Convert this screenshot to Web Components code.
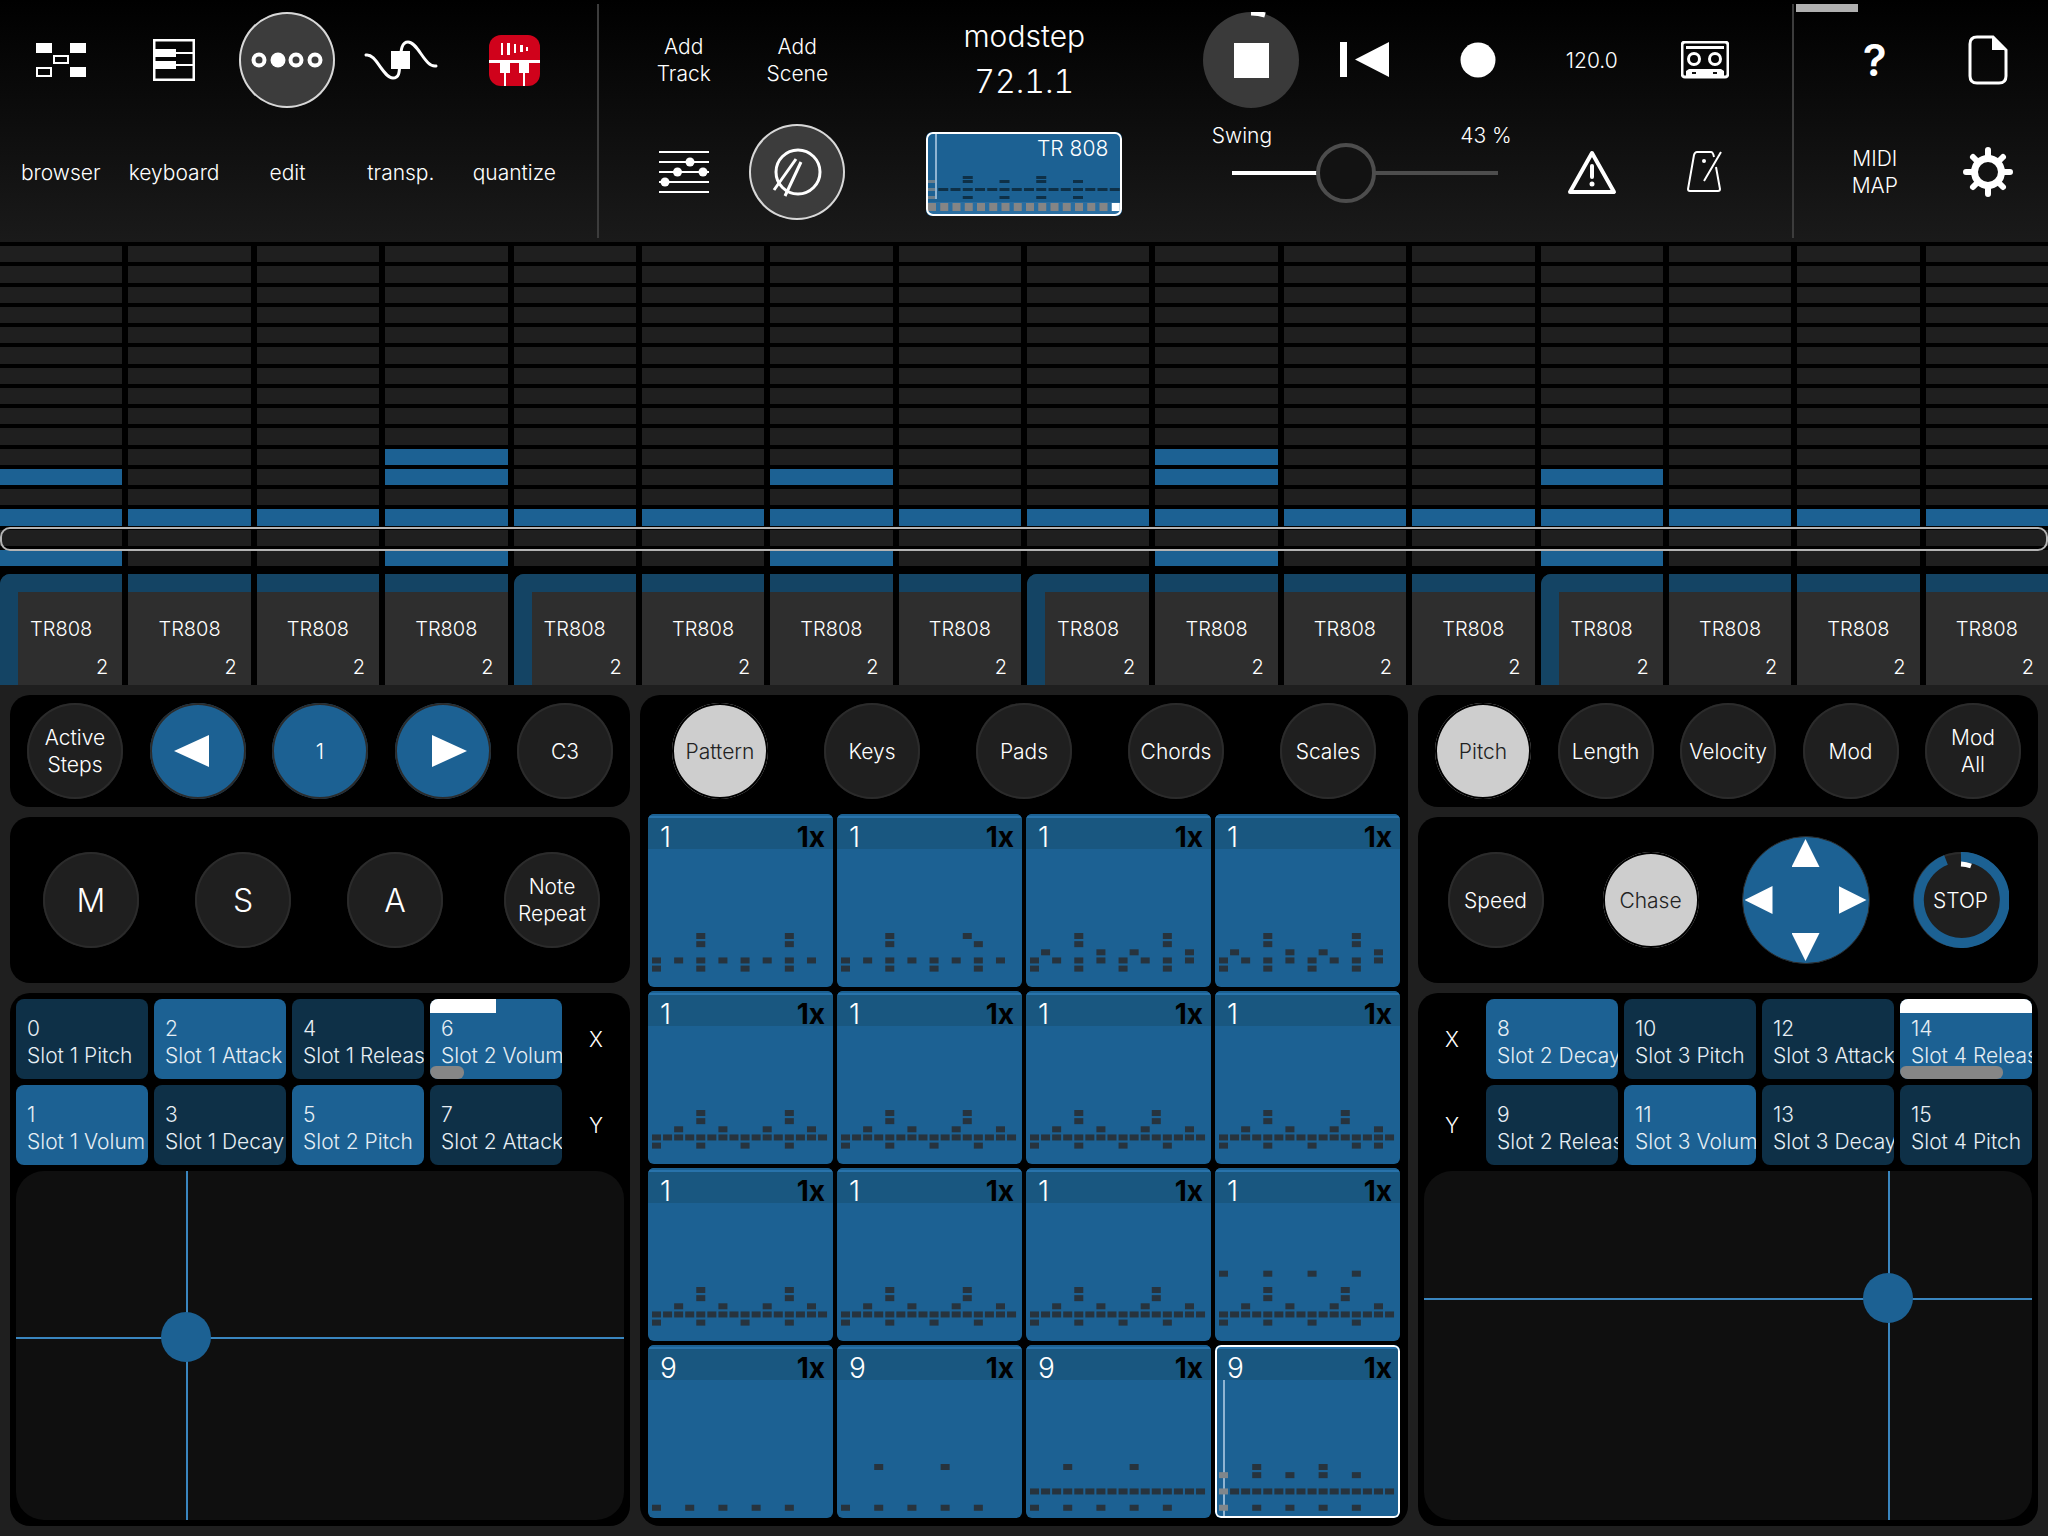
<!DOCTYPE html>
<html lang="en">
<head>
<meta charset="utf-8">
<meta name="viewport" content="width=device-width, initial-scale=1">
<title>modstep</title>
<style>
    body {
        margin: 0;
        background: #1f1f1f;
        color: #fff;
        font-family: Inter, "Liberation Sans", sans-serif;
        font-weight: 300;
        font-size: 21px;
        line-height: 27px;
        --blue: #1c6193;
        --dark-blue: #0e3047;
    }
</style>
</head>
<body>
<step-app></step-app>

<script>
// Small helper: attach an open shadow root with styles and markup
function shadow(el, css, html) {
    const root = el.shadowRoot || el.attachShadow({ mode: 'open' });
    root.innerHTML = `<style>* { box-sizing: border-box; } ${css}</style>${html}`;
    return root;
}

const ICONS = {
    browser: [50, 34, `<path fill="#fff" d="M0 0h16v10H0zM34 0h16v10H34zM34 24h16v10H34z"/><path fill="none" stroke="#fff" stroke-width="2" d="M18 13h14v7H18zM1 25h14v8H1z"/>`],
    keyboard: [42, 42, `<rect x="1" y="1" width="40" height="40" fill="none" stroke="#fff" stroke-width="3"/><path fill="#fff" d="M1 10h22v8H1zM1 22h22v8H1zM22 13h19v2H22zM22 25h19v2H22z"/>`],
    edit: [72, 16, `<g fill="none" stroke="#fff" stroke-width="4"><circle cx="8" cy="8" r="5.5"/><circle cx="45" cy="8" r="5.5"/><circle cx="64" cy="8" r="5.5"/></g><circle cx="27" cy="8" r="7.5" fill="#fff"/>`],
    transp: [74, 44, `<path d="M2 17C12 15 19 40 29 40C37 40 35 30 36 22C37 14 37 4 44 4C54 4 61 30 72 28" fill="none" stroke="#fff" stroke-width="3" stroke-linecap="round"/><path fill="#fff" d="M27 13h19v18H27z"/>`],
    quantize: [51, 51, `<rect width="51" height="51" rx="12" fill="#d0021b"/><path fill="#fff" d="M0 25h51v3H0zM12 8h2v12h-2zM18 8h3v12h-3zM25 9h2v9h-2zM31 10h3v7h-3zM37 12h2v4h-2zM11 28h10v10h-4v13h-2V38h-4zM30 28h10v10h-4v13h-2V38h-4z"/>`],
    mixer: [50, 42, `<path stroke="#fff" stroke-width="2" d="M0 1h50M0 11h50M0 21h50M0 31h50M0 41h50"/><g fill="#fff"><circle cx="31" cy="11" r="4.5"/><circle cx="18.5" cy="21" r="4.5"/><circle cx="44" cy="21" r="4.5"/><circle cx="6" cy="31" r="4.5"/></g>`],
    drum: [50, 52, `<g fill="none" stroke="#fff" stroke-width="3"><circle cx="26" cy="26" r="22"/><path d="M24 13L2 44M29 16L13 50"/></g>`],
    stop: [96, 96, `<path fill="#fff" d="M31 31h35v35H31z"/><path d="M48 1A47 47 0 0 1 62 3" fill="none" stroke="#fff" stroke-width="5"/>`],
    back: [50, 36, `<path fill="#fff" d="M0 0h7v35H0zM49 0v35L15 17.5z"/>`],
    record: [36, 36, `<circle cx="18" cy="18" r="17.5" fill="#fff"/>`],
    tape: [48, 38, `<rect x="1" y="1" width="46" height="35" rx="3" fill="none" stroke="#fff" stroke-width="3"/><path fill="#fff" d="M5 5h38v3H5zM5 36v-6l3-2h32l3 2v6z"/><g fill="none" stroke="#fff" stroke-width="3"><circle cx="13" cy="18" r="5.5"/><circle cx="34" cy="18" r="5.5"/></g><path fill="#111" d="M11 31h4v2h-4zM32 31h4v2h-4z"/>`],
    warning: [50, 44, `<path d="M25 3L47 42H3z" fill="none" stroke="#fff" stroke-width="4" stroke-linejoin="round"/><path d="M25 16v11" stroke="#fff" stroke-width="4" stroke-linecap="round"/><circle cx="25" cy="34" r="2.5" fill="#fff"/>`],
    metronome: [36, 42, `<path d="M29 16L33 38Q33 40 31 40H3Q1 40 1 38L7 4Q8 1 10 1H24Q26 1 27 6M34 1L17 30" fill="none" stroke="#fff" stroke-width="2"/><circle cx="17" cy="10" r="2" fill="#fff"/>`],
    doc: [40, 50, `<path d="M25 2H9Q2 2 2 9V41Q2 48 9 48H31Q38 48 38 41V15z" fill="none" stroke="#fff" stroke-width="3"/><path d="M24 1V15H38z" fill="#fff"/>`],
    gear: [50, 50, `<circle cx="25" cy="25" r="13.5" fill="none" stroke="#fff" stroke-width="7"/><path d="M25 3v7M25 40v7M3 25h7M40 25h7M10 10l4 4M36 36l4 4M40 10l-4 4M14 36l-4 4" stroke="#fff" stroke-width="6" stroke-linecap="round"/>`],
    left: [96, 96, `<path fill="#fff" d="M59 32v32L24 48z"/>`],
    right: [96, 96, `<path fill="#fff" d="M37 32v32l35-16z"/>`],
    ring: [96, 96, `<path d="M48 5A43 43 0 1 1 33 8" fill="none" stroke="#1c6193" stroke-width="10"/><path d="M48 12A36 36 0 0 1 58 14" fill="none" stroke="#fff" stroke-width="5"/>`]
};

class AppIcon extends HTMLElement {
    connectedCallback() {
        const [w, h, body] = ICONS[this.getAttribute('name')];
        shadow(this, `:host { display: block; } svg { display: block; }`,
            `<svg width="${w}" height="${h}" viewBox="0 0 ${w} ${h}" aria-hidden="true">${body}</svg>`);
    }
}
customElements.define('app-icon', AppIcon);

// Round button; variants: blue, light, lit, gray, plain
class RoundButton extends HTMLElement {
    connectedCallback() {
        const label = this.getAttribute('label');
        const icon = this.getAttribute('icon');
        shadow(this, `
            :host { display: block; }
            button {
                display: grid;
                place-items: center;
                width: 96px;
                height: 96px;
                padding: 0;
                border: 0;
                border-radius: 50%;
                background: #1f1f1f;
                box-shadow: inset 0 0 0 2px #2b2b2b;
                color: inherit;
                font: inherit;
                white-space: nowrap;
                cursor: pointer;
            }
            app-icon, .text { grid-area: 1 / 1; }
            :host([variant="blue"]) button { background: var(--blue); }
            :host([variant="light"]) button { background: #cecece; box-shadow: inset 0 0 0 2px #000; color: #222; }
            :host([variant="lit"]) button { background: #3c3c3c; box-shadow: inset 0 0 0 2px #d8d8d8; }
            :host([variant="gray"]) button { background: #3a3a3a; box-shadow: none; }
            :host([variant="plain"]) button { background: none; box-shadow: none; }
            :host([size="large"]) button { font-size: 32px; }
            :host([size="help"]) button { font-size: 44px; font-weight: 600; }
        `, `<button type="button" ${label ? `aria-label="${label}"` : ''}>
                ${icon ? `<app-icon name="${icon}"></app-icon>` : ''}
                <span class="text"><slot></slot></span>
            </button>`);
    }
}
customElements.define('round-button', RoundButton);

class SwingSlider extends HTMLElement {
    connectedCallback() {
        const value = this.getAttribute('value');
        shadow(this, `
            :host { display: block; width: 326px; padding-top: 6px; }
            .labels { display: flex; justify-content: space-between; padding: 0 16px 0 10px; }
            input {
                appearance: none;
                display: block;
                width: 100%;
                height: 60px;
                margin: -6px 0 0;
                background: linear-gradient(90deg, #fff ${value}%, #4d4d4d ${value}%) center / calc(100% - 60px) 4px no-repeat;
            }
            input::-webkit-slider-thumb {
                appearance: none;
                width: 60px;
                height: 60px;
                border: 4px solid #4d4d4d;
                border-radius: 50%;
                background: #121212;
            }
        `, `<div class="labels"><label for="swing">Swing</label><output for="swing">${value} %</output></div>
            <input id="swing" type="range" min="0" max="100" value="${value}">`);
    }
}
customElements.define('swing-slider', SwingSlider);

// Preview of the clip that is playing
class ClipPreview extends HTMLElement {
    connectedCallback() {
        const rows = [[44, [3, 9]], [48, [0, 3, 6, 9, 12]], [56, [...Array(16).keys()]], [64, [0, 3, 6, 9, 12]]];
        const notes = rows.map(([y, cols]) => cols.map(c =>
            `<rect x="${c * 12.25}" y="${y}" width="10" height="3" fill="${c ? '#0e3047' : '#6c7f8c'}"/>`).join('')).join('');
        const steps = [...Array(16).keys()].map(c =>
            `<rect x="${c * 12.25 + 2}" y="71" width="8" height="8" fill="${c === 15 ? '#fff' : '#858585'}"/>`).join('');
        shadow(this, `
            :host { display: block; width: 196px; height: 84px; }
            button {
                display: grid;
                width: 100%;
                height: 100%;
                padding: 0;
                border: 0;
                border-radius: 6px;
                overflow: hidden;
                background: var(--blue);
                color: inherit;
                font: inherit;
            }
            svg, span { grid-area: 1 / 1; }
            span { justify-self: end; align-self: start; padding: 3px 14px; }
        `, `<button type="button"><svg width="196" height="84" viewBox="0 0 196 84" aria-hidden="true">
                <rect y="70" width="196" height="14" fill="#2a6ea1"/>
                ${notes}${steps}
                <path d="M10 2V67" stroke="#8fb4d2" stroke-width="2"/>
                <rect x="1" y="1" width="194" height="82" rx="6" fill="none" stroke="#fff" stroke-width="2"/>
            </svg><span><slot></slot></span></button>`);
    }
}
customElements.define('clip-preview', ClipPreview);

class TopBar extends HTMLElement {
    connectedCallback() {
        shadow(this, `
            :host {
                display: grid;
                grid-template-columns: 597fr 1195fr 256fr;
                padding: 4px 0;
                background: linear-gradient(#000, #1a1a1a);
            }
            section {
                display: grid;
                grid-template-rows: 112px 112px;
                padding-bottom: 10px;
                place-items: center;
                text-align: center;
                position: relative;
            }
            section + section { border-left: 2px solid #3c3c3c; }
            .views { grid-template-columns: repeat(5, 1fr); padding-left: 4px; padding-right: 26px; }
            .transport { grid-template-columns: repeat(10, 1fr); padding-left: 28px; padding-right: 30px; }
            .system { grid-template-columns: repeat(2, 1fr); padding-left: 24px; padding-right: 3px; }
            .song { grid-area: 1 / 3 / 3 / 6; align-self: start; padding-top: 9px; font-size: 30px; line-height: 46px; }
            .song output { display: block; font-size: 32px; font-variant-numeric: tabular-nums; }
            clip-preview { margin-top: 27px; font-size: 21px; line-height: 27px; }
            swing-slider { grid-area: 2 / 6 / 3 / 9; align-self: start; }
            .load { position: absolute; top: 0; left: 2px; width: 62px; height: 8px; background: #b0b0b0; }
        `, `
            <section class="views">
                <round-button variant="plain" icon="browser" label="Browser view"></round-button>
                <round-button variant="plain" icon="keyboard" label="Keyboard view"></round-button>
                <round-button variant="lit" icon="edit" label="Step edit"></round-button>
                <round-button variant="plain" icon="transp" label="Transpose tool"></round-button>
                <round-button variant="plain" icon="quantize" label="Quantize tool"></round-button>
                <span>browser</span><span>keyboard</span><span>edit</span><span>transp.</span><span>quantize</span>
            </section>
            <section class="transport">
                <round-button variant="plain">Add<br>Track</round-button>
                <round-button variant="plain">Add<br>Scene</round-button>
                <div class="song">
                    <div>modstep</div>
                    <output>72.1.1</output>
                    <clip-preview>TR 808</clip-preview>
                </div>
                <round-button variant="gray" icon="stop" label="Stop"></round-button>
                <round-button variant="plain" icon="back" label="To start"></round-button>
                <round-button variant="plain" icon="record" label="Record"></round-button>
                <round-button variant="plain">120.0</round-button>
                <round-button variant="plain" icon="tape" label="Tape"></round-button>
                <round-button variant="plain" icon="mixer" label="Mixer"></round-button>
                <round-button variant="lit" icon="drum" label="Drums"></round-button>
                <swing-slider value="43"></swing-slider>
                <round-button variant="plain" icon="warning" label="Panic"></round-button>
                <round-button variant="plain" icon="metronome" label="Metronome"></round-button>
            </section>
            <section class="system">
                <div class="load"></div>
                <round-button variant="plain" size="help">?</round-button>
                <round-button variant="plain" icon="doc" label="Project"></round-button>
                <round-button variant="plain">MIDI<br>MAP</round-button>
                <round-button variant="plain" icon="gear" label="Settings"></round-button>
            </section>`);
    }
}
customElements.define('top-bar', TopBar);

// Note lanes over the sixteen steps of the pattern
class NoteGrid extends HTMLElement {
    connectedCallback() {
        const all = [...Array(16).keys()];
        const notes = { 10: [3, 9], 11: [0, 3, 6, 9, 12], 13: all, 15: [0, 3, 6, 9, 12] };
        const cells = all.map(r => all.map(c =>
            `<i style="grid-area: ${r + 1} / ${c + 1}"${(notes[r] || []).includes(c) ? ' class="on"' : ''}></i>`).join('')).join('');
        shadow(this, `
            :host {
                display: grid;
                grid-template: repeat(16, 1fr) / repeat(16, 1fr);
                gap: 4px 6px;
                height: 320px;
            }
            i { background: #1f1f1f; }
            i.on { background: var(--blue); }
            .lane { grid-area: 15 / 1 / 16 / -1; margin: -3px 0 -5px; border: 2px solid #b4b4b4; border-radius: 10px; }
        `, `${cells}<div class="lane"></div>`);
    }
}
customElements.define('note-grid', NoteGrid);

class StepPad extends HTMLElement {
    connectedCallback() {
        shadow(this, `
            :host { display: block; }
            button {
                display: block;
                width: 100%;
                padding: 24px 0 1px;
                border: 0 solid #144464;
                border-top-width: 18px;
                background: #2e2e2e;
                color: inherit;
                font: inherit;
                font-size: 20px;
                line-height: 27px;
            }
            span { display: block; }
            .count { padding: 11px 14px 3px; text-align: right; }
            :host([beat]) button { border-left-width: 18px; border-top-left-radius: 10px; }
            :host([beat]) .name { margin-left: -18px; }
        `, `<button type="button"><span class="name"><slot></slot></span><span class="count">${this.getAttribute('count')}</span></button>`);
    }
}
customElements.define('step-pad', StepPad);

// Modulation slot with optional meters at its top and bottom edge
class ModSlot extends HTMLElement {
    connectedCallback() {
        const meter = this.getAttribute('meter');
        const range = this.getAttribute('range');
        shadow(this, `
            :host { display: block; min-width: 0; }
            button {
                display: block;
                position: relative;
                width: 100%;
                height: 80px;
                padding: 16px 0 10px 11px;
                border: 0;
                border-radius: 8px;
                overflow: hidden;
                background: var(--dark-blue);
                color: #e6eef4;
                font: inherit;
                text-align: left;
                white-space: nowrap;
            }
            :host([on]) button { background: var(--blue); }
            span { display: block; position: relative; }
            i { position: absolute; left: 0; }
            .meter { top: 0; height: 14px; background: #fff; }
            .range { bottom: 0; height: 13px; border-radius: 6px; background: #868686; }
        `, `<button type="button">
                ${meter ? `<i class="meter" style="width: ${meter}%"></i><i class="range" style="width: ${range}%"></i>` : ''}
                <span>${this.getAttribute('number')}</span><span><slot></slot></span>
            </button>`);
    }
}
customElements.define('mod-slot', ModSlot);

class XyPad extends HTMLElement {
    connectedCallback() {
        const x = this.getAttribute('x');
        const y = this.getAttribute('y');
        shadow(this, `
            :host { display: block; position: relative; overflow: hidden; min-height: 200px; border-radius: 28px; background: #0f0f0f; }
            i { position: absolute; background: #3a86bf; }
            .v { left: ${x}%; top: 0; bottom: 0; width: 2px; }
            .h { top: ${y}%; left: 0; right: 0; height: 2px; }
            .dot { left: ${x}%; top: ${y}%; width: 50px; height: 50px; margin: -25px; border-radius: 50%; background: var(--blue); }
        `, `<i class="v"></i><i class="h"></i><i class="dot"></i>`);
    }
}
customElements.define('xy-pad', XyPad);

// Pattern cell; notes is a list of "row:col,col" groups, * stands for every column
class PatternCell extends HTMLElement {
    connectedCallback() {
        const playing = this.hasAttribute('playing');
        const notes = this.getAttribute('notes').split(' ').map(group => {
            const [row, cols] = group.split(':');
            const list = cols === '*' ? [...Array(16).keys()] : cols.split(',').map(Number);
            return list.map(c => `<rect x="${4 + c * 11.07}" y="${119 + row * 8.15}" width="9" height="6" fill="${playing && c === 0 ? '#7f868b' : '#27333d'}"/>`).join('');
        }).join('');
        shadow(this, `
            :host { display: block; min-height: 120px; }
            button {
                display: grid;
                grid-template: 35px 1fr / 1fr;
                position: relative;
                width: 100%;
                height: 100%;
                padding: 0;
                border: 0;
                border-radius: 6px;
                overflow: hidden;
                background: var(--blue);
                color: inherit;
                font: inherit;
                font-size: 28px;
                line-height: 28px;
            }
            .head {
                grid-area: 1 / 1;
                display: flex;
                justify-content: space-between;
                padding: 9px 8px 0 12px;
                background: linear-gradient(#1c6193 2px, #2873ab 2px 4px, #195780 4px);
            }
            b { color: #000; font-weight: 700; }
            svg { grid-area: 1 / 1 / 3 / 2; width: 100%; height: 100%; min-height: 0; }
            :host([playing]) button::after { content: ""; position: absolute; inset: 0; border: 2px solid #fff; border-radius: 6px; }
        `, `<button type="button">
                <span class="head"><slot></slot><b>1x</b></span>
                <svg viewBox="0 0 185 173" preserveAspectRatio="none" aria-hidden="true">
                    ${playing ? '<path d="M9 35V173" stroke="#8fb4d2" stroke-width="2"/>' : ''}${notes}
                </svg>
            </button>`);
    }
}
customElements.define('pattern-cell', PatternCell);

class PanelBox extends HTMLElement {
    connectedCallback() {
        shadow(this, `:host { display: block; border-radius: 20px; background: #000; }`, `<slot></slot>`);
    }
}
customElements.define('panel-box', PanelBox);

class ArrowPad extends HTMLElement {
    connectedCallback() {
        shadow(this, `
            :host {
                display: grid;
                grid-template: 28px 1fr 28px / 28px 1fr 28px;
                place-items: center;
                box-sizing: border-box;
                width: 128px;
                height: 128px;
                padding: 2px;
                border: 1px solid #2b2b2b;
                border-radius: 50%;
                background: var(--blue);
            }
            button { width: 28px; height: 28px; padding: 0; border: 0; background: #fff; }
            .up { grid-area: 1 / 2; clip-path: polygon(50% 0, 100% 100%, 0 100%); }
            .left { grid-area: 2 / 1; clip-path: polygon(0 50%, 100% 0, 100% 100%); }
            .right { grid-area: 2 / 3; clip-path: polygon(100% 50%, 0 0, 0 100%); }
            .down { grid-area: 3 / 2; clip-path: polygon(50% 100%, 0 0, 100% 0); }
        `, `
            <button class="up" type="button" aria-label="Up"></button>
            <button class="left" type="button" aria-label="Left"></button>
            <button class="right" type="button" aria-label="Right"></button>
            <button class="down" type="button" aria-label="Down"></button>`);
    }
}
customElements.define('arrow-pad', ArrowPad);

const LOW = '3:* 4:0,4,8,12';
const PATTERNS = [
    ['1', '0:4,12 1:4,12 3:0,2,4,6,8,10,12,14 4:0,4,8,12'],
    ['1', '0:4,11 1:4,12 3:0,2,4,6,8,10,12,14 4:0,4,8,12'],
    ['1', '0:4,12 1:4,12 2:1,6,9,14 3:0,2,4,6,8,10,12,14 4:0,4,8,12'],
    ['1', '0:4,12 1:4,12 2:1,6,9,14 3:0,2,4,6,8,10,12,14 4:0,4,8,12'],
    ['1', `0:4,12 1:4,12 2:2,6,10,14 ${LOW}`],
    ['1', `0:4,11 1:4,11 2:2,6,10,14 ${LOW}`],
    ['1', `0:4,11 1:4,11 2:2,6,10,14 ${LOW}`],
    ['1', `0:4,11 1:4,11 2:2,6,10,14 ${LOW},14`],
    ['1', `0:4,12 1:4,12 2:2,6,10,14 ${LOW}`],
    ['1', `0:4,11 1:4,11 2:2,6,10,14 ${LOW}`],
    ['1', `0:4,11 1:4,11 2:2,6,10,14 ${LOW}`],
    ['1', `-2:0,4,8,12 0:4,11 1:4,11 2:2,6,10,14 ${LOW}`],
    ['9', '5:0,3,6,9,12'],
    ['9', '0:3,9 5:0,3,6,9,12'],
    ['9', '0:3,9 3:* 5:0,3,6,9,12'],
    ['9', '0:3,9 1:0,3,6,9,12 3:* 5:0,3,6,9,12', 'playing']
];

class StepApp extends HTMLElement {
    connectedCallback() {
        const pads = [...Array(16).keys()].map(i => `<step-pad count="2"${i % 4 ? '' : ' beat'}>TR808</step-pad>`).join('');
        const cells = PATTERNS.map(([n, notes, state]) => `<pattern-cell notes="${notes}" ${state || ''}>${n}</pattern-cell>`).join('');
        shadow(this, `
            :host { display: flex; flex-direction: column; min-height: 100vh; }
            .sequencer { padding-top: 4px; background: #000; }
            .pads { display: grid; grid-template-columns: repeat(16, 1fr); gap: 6px; padding-top: 8px; }
            main { flex: 1; display: grid; grid-template-columns: 620fr 768fr 620fr; gap: 10px; padding: 10px; }
            .side { display: grid; grid-template-rows: 112px 166px 1fr; gap: 10px; min-width: 0; }
            .row { display: flex; justify-content: space-between; align-items: center; padding: 8px 17px; text-align: center; }
            .track { padding: 0 30px 0 33px; }
            .track div { display: flex; gap: 56px; }
            .play { display: grid; grid-template-columns: repeat(4, 1fr); place-items: center; }
            .mod { display: grid; grid-template-rows: auto 1fr; gap: 6px; padding: 6px; }
            .slots { display: grid; grid-template-columns: repeat(4, 132fr) 56fr; gap: 6px; align-items: center; }
            .slots > span { justify-self: center; }
            .right .slots { grid-template-columns: 56fr repeat(4, 132fr); }
            .patterns { display: flex; flex-direction: column; padding: 0 8px 8px; }
            .tabs { padding: 8px 24px 15px; }
            .cells { flex: 1; display: grid; grid-template: repeat(4, 1fr) / repeat(4, 1fr); gap: 4px; }
        `, `
            <top-bar></top-bar>
            <div class="sequencer">
                <note-grid></note-grid>
                <div class="pads">${pads}</div>
            </div>
            <main>
                <div class="side">
                    <panel-box class="row">
                        <round-button>Active<br>Steps</round-button>
                        <round-button variant="blue" icon="left" label="Previous"></round-button>
                        <round-button variant="blue">1</round-button>
                        <round-button variant="blue" icon="right" label="Next"></round-button>
                        <round-button>C3</round-button>
                    </panel-box>
                    <panel-box class="row track">
                        <div>
                            <round-button size="large">M</round-button>
                            <round-button size="large">S</round-button>
                            <round-button size="large">A</round-button>
                        </div>
                        <round-button>Note<br>Repeat</round-button>
                    </panel-box>
                    <panel-box class="mod">
                        <div class="slots">
                            <mod-slot number="0">Slot 1 Pitch</mod-slot>
                            <mod-slot number="2" on>Slot 1 Attack</mod-slot>
                            <mod-slot number="4">Slot 1 Releas</mod-slot>
                            <mod-slot number="6" on meter="50" range="26">Slot 2 Volum</mod-slot>
                            <span>X</span>
                            <mod-slot number="1" on>Slot 1 Volum</mod-slot>
                            <mod-slot number="3">Slot 1 Decay</mod-slot>
                            <mod-slot number="5" on>Slot 2 Pitch</mod-slot>
                            <mod-slot number="7">Slot 2 Attack</mod-slot>
                            <span>Y</span>
                        </div>
                        <xy-pad x="28" y="47.5"></xy-pad>
                    </panel-box>
                </div>
                <panel-box class="patterns">
                    <div class="row tabs">
                        <round-button variant="light">Pattern</round-button>
                        <round-button>Keys</round-button>
                        <round-button>Pads</round-button>
                        <round-button>Chords</round-button>
                        <round-button>Scales</round-button>
                    </div>
                    <div class="cells">${cells}</div>
                </panel-box>
                <div class="side right">
                    <panel-box class="row">
                        <round-button variant="light">Pitch</round-button>
                        <round-button>Length</round-button>
                        <round-button>Velocity</round-button>
                        <round-button>Mod</round-button>
                        <round-button>Mod<br>All</round-button>
                    </panel-box>
                    <panel-box class="play">
                        <round-button>Speed</round-button>
                        <round-button variant="light">Chase</round-button>
                        <arrow-pad></arrow-pad>
                        <round-button icon="ring">STOP</round-button>
                    </panel-box>
                    <panel-box class="mod">
                        <div class="slots">
                            <span>X</span>
                            <mod-slot number="8" on>Slot 2 Decay</mod-slot>
                            <mod-slot number="10">Slot 3 Pitch</mod-slot>
                            <mod-slot number="12">Slot 3 Attack</mod-slot>
                            <mod-slot number="14" on meter="100" range="78">Slot 4 Releas</mod-slot>
                            <span>Y</span>
                            <mod-slot number="9">Slot 2 Releas</mod-slot>
                            <mod-slot number="11" on>Slot 3 Volum</mod-slot>
                            <mod-slot number="13">Slot 3 Decay</mod-slot>
                            <mod-slot number="15">Slot 4 Pitch</mod-slot>
                        </div>
                        <xy-pad x="76.3" y="36.5"></xy-pad>
                    </panel-box>
                </div>
            </main>`);
    }
}
customElements.define('step-app', StepApp);
</script>
</body>
</html>
